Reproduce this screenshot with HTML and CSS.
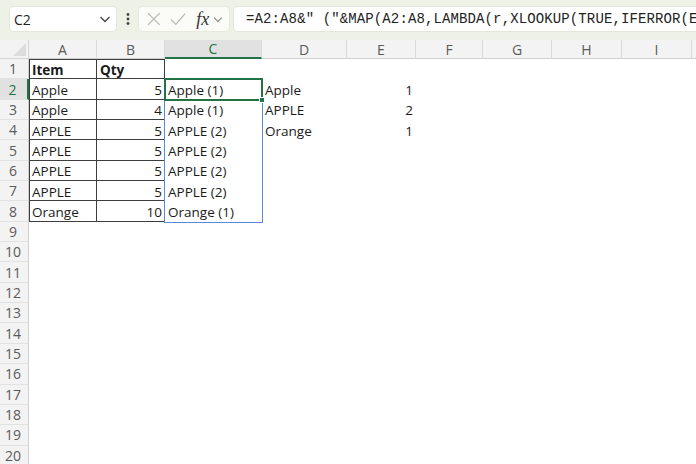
FILE: index.html
```html
<!DOCTYPE html>
<html>
<head>
<meta charset="utf-8">
<link rel="stylesheet" href="styles.css">
</head>
<body>
<div class="toolbar">
  <div class="namebox">
    <span class="ref">C2</span>
    <svg class="chev" width="12" height="8" viewBox="0 0 12 8"><path d="M1.5 2 L6 6.5 L10.5 2" fill="none" stroke="#444" stroke-width="1.3"/></svg>
  </div>
  <div class="dots">
    <svg width="4" height="14" viewBox="0 0 4 14"><circle cx="2" cy="2.5" r="1.4" fill="#444"/><circle cx="2" cy="7" r="1.4" fill="#444"/><circle cx="2" cy="11.5" r="1.4" fill="#444"/></svg>
  </div>
  <div class="fnbox">
    <svg width="16" height="16" viewBox="0 0 16 16"><path d="M2 2 L14 14 M14 2 L2 14" stroke="#b8bab2" stroke-width="1.3" fill="none"/></svg>
    <svg width="18" height="16" viewBox="0 0 18 16"><path d="M2 8.5 L7 13.5 L16.5 2.5" stroke="#b8bab2" stroke-width="1.3" fill="none"/></svg>
    <span class="fx">fx</span>
    <svg width="10" height="7" viewBox="0 0 10 7"><path d="M1 1.5 L5 5.5 L9 1.5" fill="none" stroke="#888" stroke-width="1.1"/></svg>
  </div>
  <div class="formula">=A2:A8&amp;" ("&amp;MAP(A2:A8,LAMBDA(r,XLOOKUP(TRUE,IFERROR(EXACT(r,UNIQUE(A2:A8)),FALSE),SEQUENCE(ROWS(UNIQUE(A2:A8))))))&amp;")"</div>
</div>

<div class="sheet">
  <div class="corner"><svg width="14" height="14" viewBox="0 0 14 14"><path d="M14 1 L14 14 L1 14 Z" fill="#dcdcdc"/></svg></div>
  <div class="ch">A</div>
  <div class="ch">B</div>
  <div class="ch csel">C</div>
  <div class="ch">D</div>
  <div class="ch">E</div>
  <div class="ch">F</div>
  <div class="ch">G</div>
  <div class="ch">H</div>
  <div class="ch">I</div>
  <div class="ch last"></div>

  <div class="rh">1</div>
  <div class="c tb bold">Item</div>
  <div class="c tb bold">Qty</div>
  <div class="c"></div>
  <div class="c"></div>
  <div class="c"></div>
  <div class="fill"></div>

  <div class="rh rsel">2</div>
  <div class="c tb">Apple</div>
  <div class="c tb num">5</div>
  <div class="c">Apple (1)</div>
  <div class="c">Apple</div>
  <div class="c num">1</div>
  <div class="fill"></div>

  <div class="rh">3</div>
  <div class="c tb">Apple</div>
  <div class="c tb num">4</div>
  <div class="c">Apple (1)</div>
  <div class="c">APPLE</div>
  <div class="c num">2</div>
  <div class="fill"></div>

  <div class="rh">4</div>
  <div class="c tb">APPLE</div>
  <div class="c tb num">5</div>
  <div class="c">APPLE (2)</div>
  <div class="c">Orange</div>
  <div class="c num">1</div>
  <div class="fill"></div>

  <div class="rh">5</div>
  <div class="c tb">APPLE</div>
  <div class="c tb num">5</div>
  <div class="c">APPLE (2)</div>
  <div class="blank2"></div>

  <div class="rh">6</div>
  <div class="c tb">APPLE</div>
  <div class="c tb num">5</div>
  <div class="c">APPLE (2)</div>
  <div class="blank2"></div>

  <div class="rh">7</div>
  <div class="c tb">APPLE</div>
  <div class="c tb num">5</div>
  <div class="c">APPLE (2)</div>
  <div class="blank2"></div>

  <div class="rh">8</div>
  <div class="c tb">Orange</div>
  <div class="c tb num">10</div>
  <div class="c">Orange (1)</div>
  <div class="blank2"></div>

  <div class="rh">9</div><div class="blank"></div>
  <div class="rh">10</div><div class="blank"></div>
  <div class="rh">11</div><div class="blank"></div>
  <div class="rh">12</div><div class="blank"></div>
  <div class="rh">13</div><div class="blank"></div>
  <div class="rh">14</div><div class="blank"></div>
  <div class="rh">15</div><div class="blank"></div>
  <div class="rh">16</div><div class="blank"></div>
  <div class="rh">17</div><div class="blank"></div>
  <div class="rh">18</div><div class="blank"></div>
  <div class="rh">19</div><div class="blank"></div>
  <div class="rh">20</div><div class="blank"></div>

  <div class="tframe"></div>
  <div class="spill"></div>
  <div class="sel"><span class="handle"></span></div>
</div>
</body>
</html>
```

FILE: styles.css
```css
* { box-sizing: border-box; }
html, body {
  margin: 0;
  padding: 0;
  width: 696px;
  height: 464px;
  overflow: hidden;
  background: #ffffff;
}
body {
  font-family: "Open Sans", "Liberation Sans", sans-serif;
}

.toolbar {
  height: 40px;
  background: #eef1e6;
  display: flex;
  align-items: flex-start;
  padding-top: 7px;
  padding-left: 10px;
  overflow: hidden;
  white-space: nowrap;
}
.namebox {
  width: 106px;
  height: 24px;
  background: #fff;
  border-radius: 4px;
  box-shadow: 0 0 0 1px #e3e6da;
  display: flex;
  align-items: center;
  justify-content: space-between;
  padding: 0 5px 0 4px;
  flex: none;
}
.ref {
  font-size: 14px;
  color: #1f1f1f;
}
.dots {
  width: 23px;
  height: 24px;
  display: flex;
  align-items: center;
  justify-content: center;
  flex: none;
}
.fnbox {
  width: 90px;
  height: 24px;
  background: #fbfcf8;
  border-radius: 4px;
  box-shadow: 0 0 0 1px #e6e9de;
  display: flex;
  align-items: center;
  padding: 0 6px 0 7px;
  gap: 7px;
  flex: none;
}
.fx {
  font-family: "Liberation Serif", serif;
  font-style: italic;
  font-size: 18px;
  color: #333;
  margin-left: 3px;
  margin-right: -3px;
  line-height: 1;
}
.formula {
  margin-left: 5px;
  height: 24px;
  flex: none;
  width: 480px;
  background: #fff;
  border-radius: 4px;
  box-shadow: 0 0 0 1px #e3e6da;
  font-family: "Liberation Mono", monospace;
  font-size: 14px;
  letter-spacing: 0.12px;
  line-height: 24px;
  color: #222;
  padding-left: 12px;
  overflow: hidden;
}

.sheet {
  position: relative;
  display: grid;
  grid-template-columns: 29px 68px 68px 97px 85px 69px 67px 69px 70px 70px 1fr;
  grid-template-rows: 19px repeat(20, 20.35px);
  height: 424px;
  overflow: hidden;
  font-size: 13.5px;
  color: #1a1a1a;
}
.corner {
  background: #f3f3f3;
  border-right: 1px solid #d4d4d4;
  border-bottom: 1px solid #d4d4d4;
  display: flex;
  align-items: flex-end;
  justify-content: flex-end;
  padding: 0 2px 2px 0;
}
.ch {
  background: #f3f3f3;
  border-right: 1px solid #dadada;
  border-bottom: 1px solid #cfcfcf;
  color: #5a5a5a;
  font-size: 14px;
  display: flex;
  align-items: center;
  justify-content: center;
}
.ch.last { border-right: none; }
.ch.csel {
  background: #e1e1e1;
  color: #217346;
  border-bottom: 2px solid #217346;
}
.rh {
  background: #f3f3f3;
  border-right: 1px solid #cfcfcf;
  border-bottom: 1px solid #e2e2e2;
  color: #5a5a5a;
  font-size: 14px;
  display: flex;
  align-items: center;
  justify-content: center;
  padding-right: 2px;
}
.rh.rsel {
  background: #e1e1e1;
  color: #217346;
  border-right: 2px solid #217346;
}
.c {
  display: flex;
  align-items: center;
  padding: 1px 3px 0 3px;
  white-space: nowrap;
}
.c.num { justify-content: flex-end; }
.c.bold { font-weight: 700; }
.c.tb { box-shadow: inset -1px -1px 0 #3d3d3d; }
.fill { grid-column: 7 / -1; }
.blank2 { grid-column: 5 / -1; }
.blank { grid-column: 2 / -1; }

.tframe {
  position: absolute;
  grid-column: 2 / 4;
  grid-row: 2 / 10;
  inset: 0;
  box-shadow: inset 1px 1px 0 #3d3d3d;
  pointer-events: none;
}
.spill {
  position: absolute;
  grid-column: 4 / 5;
  grid-row: 3 / 10;
  inset: 0 -1px -1px -1px;
  border: 1px solid #5b8ad4;
  pointer-events: none;
}
.sel {
  position: absolute;
  grid-column: 4 / 5;
  grid-row: 3 / 4;
  inset: -1px -1px -1px -1px;
  border: 2px solid #217346;
  pointer-events: none;
}
.handle {
  position: absolute;
  right: -4px;
  bottom: -4px;
  width: 6px;
  height: 6px;
  background: #217346;
  border: 1px solid #fff;
}
```
